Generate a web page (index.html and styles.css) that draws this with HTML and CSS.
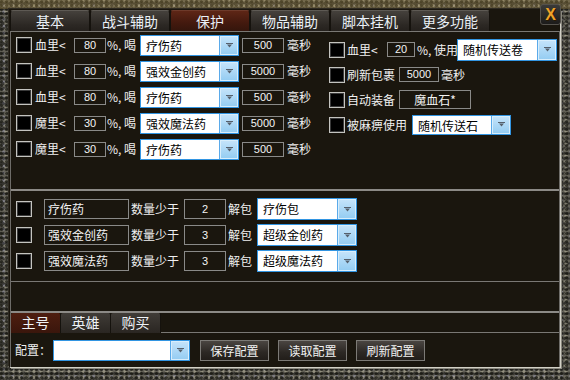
FILE: index.html
```html
<!DOCTYPE html>
<html lang="zh-CN">
<head>
    <meta charset="UTF-8">
    <title>保护</title>
    <link rel="stylesheet" href="styles.css">
</head>
<body>
    <div class="window">
        <div class="inner">
            <div class="tabs">
                <div class="tab">基本</div>
                <div class="tab">战斗辅助</div>
                <div class="tab active">保护</div>
                <div class="tab">物品辅助</div>
                <div class="tab">脚本挂机</div>
                <div class="tab">更多功能</div>
            </div>
            <div class="panel">
                <div class="sec_top">
                    <div class="col_left">
                        <div class="row">
                            <span class="cb"></span><span class="lbl w39">血里&lt;</span><span class="box w32">80</span><span class="lbl w34">%, 喝</span>
                            <div class="select w99"><span class="sel_text">疗伤药</span><span class="sel_btn"><svg width="7" height="5" viewBox="0 0 7 5"><rect width="7" height="1" fill="#56606c"/><polygon points="1,1.5 6,1.5 3.5,4.5" fill="#56606c"/></svg></span></div>
                            <span class="box w42 ml3">500</span><span class="lbl ml3">毫秒</span>
                        </div>
                        <div class="row">
                            <span class="cb"></span><span class="lbl w39">血里&lt;</span><span class="box w32">80</span><span class="lbl w34">%, 喝</span>
                            <div class="select w99"><span class="sel_text">强效金创药</span><span class="sel_btn"><svg width="7" height="5" viewBox="0 0 7 5"><rect width="7" height="1" fill="#56606c"/><polygon points="1,1.5 6,1.5 3.5,4.5" fill="#56606c"/></svg></span></div>
                            <span class="box w42 ml3">5000</span><span class="lbl ml3">毫秒</span>
                        </div>
                        <div class="row">
                            <span class="cb"></span><span class="lbl w39">血里&lt;</span><span class="box w32">80</span><span class="lbl w34">%, 喝</span>
                            <div class="select w99"><span class="sel_text">疗伤药</span><span class="sel_btn"><svg width="7" height="5" viewBox="0 0 7 5"><rect width="7" height="1" fill="#56606c"/><polygon points="1,1.5 6,1.5 3.5,4.5" fill="#56606c"/></svg></span></div>
                            <span class="box w42 ml3">500</span><span class="lbl ml3">毫秒</span>
                        </div>
                        <div class="row">
                            <span class="cb"></span><span class="lbl w39">魔里&lt;</span><span class="box w32">30</span><span class="lbl w34">%, 喝</span>
                            <div class="select w99"><span class="sel_text">强效魔法药</span><span class="sel_btn"><svg width="7" height="5" viewBox="0 0 7 5"><rect width="7" height="1" fill="#56606c"/><polygon points="1,1.5 6,1.5 3.5,4.5" fill="#56606c"/></svg></span></div>
                            <span class="box w42 ml3">5000</span><span class="lbl ml3">毫秒</span>
                        </div>
                        <div class="row">
                            <span class="cb"></span><span class="lbl w39">魔里&lt;</span><span class="box w32">30</span><span class="lbl w34">%, 喝</span>
                            <div class="select w99"><span class="sel_text">疗伤药</span><span class="sel_btn"><svg width="7" height="5" viewBox="0 0 7 5"><rect width="7" height="1" fill="#56606c"/><polygon points="1,1.5 6,1.5 3.5,4.5" fill="#56606c"/></svg></span></div>
                            <span class="box w42 ml3">500</span><span class="lbl ml3">毫秒</span>
                        </div>
                    </div>
                    <div class="col_right">
                        <div class="row_r">
                            <span class="cb mr2"></span><span class="lbl w40">血里&lt;</span><span class="box w28">20</span><span class="lbl w42">%, 使用</span>
                            <div class="select w100 h22"><span class="sel_text">随机传送卷</span><span class="sel_btn"><svg width="7" height="5" viewBox="0 0 7 5"><rect width="7" height="1" fill="#56606c"/><polygon points="1,1.5 6,1.5 3.5,4.5" fill="#56606c"/></svg></span></div>
                        </div>
                        <div class="row_r">
                            <span class="cb mr2"></span><span class="lbl w52">刷新包裹</span><span class="box w40">5000</span><span class="lbl ml2">毫秒</span>
                        </div>
                        <div class="row_r">
                            <span class="cb mr2"></span><span class="lbl w52">自动装备</span><span class="box w72 tall cjk">魔血石*</span>
                        </div>
                        <div class="row_r">
                            <span class="cb mr2"></span><span class="lbl w65">被麻痹使用</span>
                            <div class="select w99 h20"><span class="sel_text">随机传送石</span><span class="sel_btn"><svg width="7" height="5" viewBox="0 0 7 5"><rect width="7" height="1" fill="#56606c"/><polygon points="1,1.5 6,1.5 3.5,4.5" fill="#56606c"/></svg></span></div>
                        </div>
                    </div>
                </div>

                <div class="sec_mid">
                    <div class="row">
                        <span class="cb mr12"></span><span class="box name">疗伤药</span><span class="lbl w55">数量少于</span><span class="box w42 tall">2</span><span class="lbl w31">解包</span>
                        <div class="select w100 h22"><span class="sel_text">疗伤包</span><span class="sel_btn"><svg width="7" height="5" viewBox="0 0 7 5"><rect width="7" height="1" fill="#56606c"/><polygon points="1,1.5 6,1.5 3.5,4.5" fill="#56606c"/></svg></span></div>
                    </div>
                    <div class="row">
                        <span class="cb mr12"></span><span class="box name">强效金创药</span><span class="lbl w55">数量少于</span><span class="box w42 tall">3</span><span class="lbl w31">解包</span>
                        <div class="select w100 h22"><span class="sel_text">超级金创药</span><span class="sel_btn"><svg width="7" height="5" viewBox="0 0 7 5"><rect width="7" height="1" fill="#56606c"/><polygon points="1,1.5 6,1.5 3.5,4.5" fill="#56606c"/></svg></span></div>
                    </div>
                    <div class="row">
                        <span class="cb mr12"></span><span class="box name">强效魔法药</span><span class="lbl w55">数量少于</span><span class="box w42 tall">3</span><span class="lbl w31">解包</span>
                        <div class="select w100 h22"><span class="sel_text">超级魔法药</span><span class="sel_btn"><svg width="7" height="5" viewBox="0 0 7 5"><rect width="7" height="1" fill="#56606c"/><polygon points="1,1.5 6,1.5 3.5,4.5" fill="#56606c"/></svg></span></div>
                    </div>
                </div>

                <div class="sec_empty"></div>

                <div class="subtabs">
                    <div class="subtab active">主号</div>
                    <div class="subtab">英雄</div>
                    <div class="subtab">购买</div>
                    <div class="subtab_fill"></div>
                </div>

                <div class="config">
                    <span class="lbl w38">配置：</span>
                    <div class="select w137"><span class="sel_text"></span><span class="sel_btn"><svg width="7" height="5" viewBox="0 0 7 5"><rect width="7" height="1" fill="#56606c"/><polygon points="1,1.5 6,1.5 3.5,4.5" fill="#56606c"/></svg></span></div>
                    <button class="btn first">保存配置</button>
                    <button class="btn">读取配置</button>
                    <button class="btn">刷新配置</button>
                </div>
            </div>
        </div>
        <div class="close">X</div>
    </div>
</body>
</html>
```

FILE: styles.css
```css
body {
    margin: 0;
    padding: 0;
    background-color: #000;
    font-family: "Noto Sans CJK SC", "Noto Sans", sans-serif;
    font-size: 12px;
    color: #f0f0f0;
}

.window {
    position: relative;
    width: 570px;
    height: 380px;
    box-sizing: border-box;
    padding: 9px 10px 13px 9px;
    background:
        linear-gradient(rgba(150, 125, 60, 0.35), rgba(150, 125, 60, 0.35)) 0 0 / 100% 9px no-repeat,
        radial-gradient(circle at 30% 40%, rgba(20, 20, 14, 0.7) 1px, transparent 2px) 0 0 / 5px 4px,
        radial-gradient(circle at 70% 60%, rgba(210, 205, 180, 0.45) 1px, transparent 2px) 1px 2px / 7px 6px,
        radial-gradient(circle at 50% 50%, rgba(0, 0, 0, 0.45) 1px, transparent 2px) 2px 1px / 3px 5px,
        radial-gradient(circle at 40% 30%, rgba(150, 150, 170, 0.5) 1px, transparent 2px) 0 3px / 9px 7px,
        #615f55;
}

.inner {
    height: 100%;
    box-sizing: border-box;
    padding: 1px 0 0 1px;
    background-color: #1a160e;
    display: flex;
    flex-direction: column;
    box-shadow: 1px 1px 0 #d2d0c6, -1px -1px 0 #2e2a22, 2px 2px 0 #8a887e;
}

/* top tabs */
.tabs {
    display: flex;
    height: 21px;
}

.tab {
    width: 80px;
    box-sizing: border-box;
    height: 21px;
    line-height: 20px;
    text-align: center;
    font-size: 14px;
    color: #eaf0f6;
    background: linear-gradient(#45413c, #2c2824 70%, #25211d);
    border-top: 1px solid #5e5a54;
    border-left: 1px solid #15120d;
    border-right: 1px solid #15120d;
    border-radius: 3px 3px 0 0;
}

.tab.active {
    background: linear-gradient(#5e2616, #43190e 60%, #34150c);
    border-top-color: #6e3a2a;
}

.close {
    position: absolute;
    left: 540px;
    top: 4px;
    width: 21px;
    height: 21px;
    box-sizing: border-box;
    border: 1px solid #55524c;
    border-radius: 3px;
    background: linear-gradient(#3b3a38, #1c1b1a);
    color: #eea22a;
    font-family: "Liberation Sans", sans-serif;
    font-weight: bold;
    font-size: 16px;
    line-height: 19px;
    text-align: center;
    text-shadow: 1px 1px 0 #2a1a00;
}

/* main panel */
.panel {
    flex: 1;
    display: flex;
    flex-direction: column;
    border-left: 1px solid #6e6c68;
    border-right: 1px solid #6e6c68;
}

.sec_top {
    height: 157px;
    border-top: 1px solid #7a7874;
    border-bottom: 2px solid #8c8a86;
    display: grid;
    grid-template-columns: 318px 1fr;
}

.col_left {
    padding-left: 5px;
}

.col_right {
    padding-top: 5px;
}

.row {
    display: flex;
    align-items: center;
    height: 26px;
}

.row_r {
    display: flex;
    align-items: center;
    height: 25px;
}

.cb {
    width: 16px;
    height: 16px;
    box-sizing: border-box;
    background-color: #000;
    border: 1px solid #c4c4c0;
    box-shadow: inset 0 0 0 1px #3a3a3a;
    margin-right: 3px;
    flex-shrink: 0;
}

.lbl {
    white-space: nowrap;
    line-height: 16px;
}

.box {
    box-sizing: border-box;
    height: 15px;
    border: 1px solid #8a8a88;
    text-align: center;
    font-family: "Liberation Sans", sans-serif;
    font-size: 11px;
    line-height: 13px;
    color: #f4f4f4;
}

.box.tall {
    height: 20px;
    line-height: 18px;
}

.box.cjk {
    height: 19px;
    line-height: 17px;
    font-family: "Noto Sans CJK SC", sans-serif;
    font-size: 12px;
}

.box.name {
    width: 85px;
    height: 20px;
    text-align: left;
    padding-left: 3px;
    font-family: "Noto Sans CJK SC", sans-serif;
    font-size: 12px;
    line-height: 18px;
}

.select {
    display: flex;
    box-sizing: border-box;
    height: 21px;
    border: 1px solid #3295e2;
    background-color: #fff;
    flex-shrink: 0;
}

.select.h22 { height: 22px; }
.select.h20 { height: 20px; }

.sel_text {
    flex: 1;
    padding-left: 5px;
    color: #000;
    font-size: 12px;
    line-height: 19px;
    white-space: nowrap;
    overflow: hidden;
}

.sel_btn {
    width: 18px;
    border-left: 1px solid #5aaaea;
    background: linear-gradient(#c6e4fa, #93ccf2);
    box-shadow: inset 0 0 0 1px #d8eefc;
    display: flex;
    align-items: center;
    justify-content: center;
}

/* widths */
.w28 { width: 28px; }
.w31 { width: 31px; padding-left: 2px; box-sizing: border-box; }
.w32 { width: 32px; }
.w34 { width: 34px; padding-left: 1px; box-sizing: border-box; }
.w38 { width: 38px; }
.w39 { width: 39px; }
.w40 { width: 40px; }
.w42 { width: 42px; }
.lbl.w42 { padding-left: 2px; box-sizing: border-box; }
.w52 { width: 52px; }
.w55 { width: 55px; padding-left: 2px; box-sizing: border-box; }
.w65 { width: 65px; }
.w72 { width: 72px; }
.w99 { width: 99px; }
.w100 { width: 100px; }
.w137 { width: 137px; }
.ml2 { margin-left: 2px; }
.ml3 { margin-left: 3px; }
.mr2 { margin-right: 2px; }
.mr12 { margin-right: 12px; }

.sec_mid {
    height: 85px;
    padding: 5px 0 0 5px;
    border-bottom: 1px solid #7a7874;
}

.sec_empty {
    height: 29px;
    border-bottom: 2px solid #8c8a86;
}

/* bottom tabs */
.subtabs {
    display: flex;
    height: 20px;
}

.subtab {
    width: 50px;
    box-sizing: border-box;
    text-align: center;
    font-size: 14px;
    line-height: 19px;
    color: #eef2f6;
    background: linear-gradient(#403c37, #2a2622);
    border-right: 1px solid #15120d;
    border-radius: 2px 2px 0 0;
}

.subtab.active {
    background: linear-gradient(#4e1e10, #3a160c);
}

.subtab_fill {
    flex: 1;
    border-bottom: 1px solid #7a7874;
}

.config {
    height: 34px;
    display: flex;
    align-items: center;
    padding-left: 4px;
}

.btn {
    width: 69px;
    height: 21px;
    box-sizing: border-box;
    margin-left: 9px;
    padding: 0;
    border: 1px solid #7c7a76;
    background: linear-gradient(#4a4541, #2c2824 60%, #221e1a);
    color: #f2f2f2;
    font-family: "Noto Sans CJK SC", sans-serif;
    font-size: 12px;
    line-height: 19px;
}

.btn.first {
    margin-left: 10px;
}
```
